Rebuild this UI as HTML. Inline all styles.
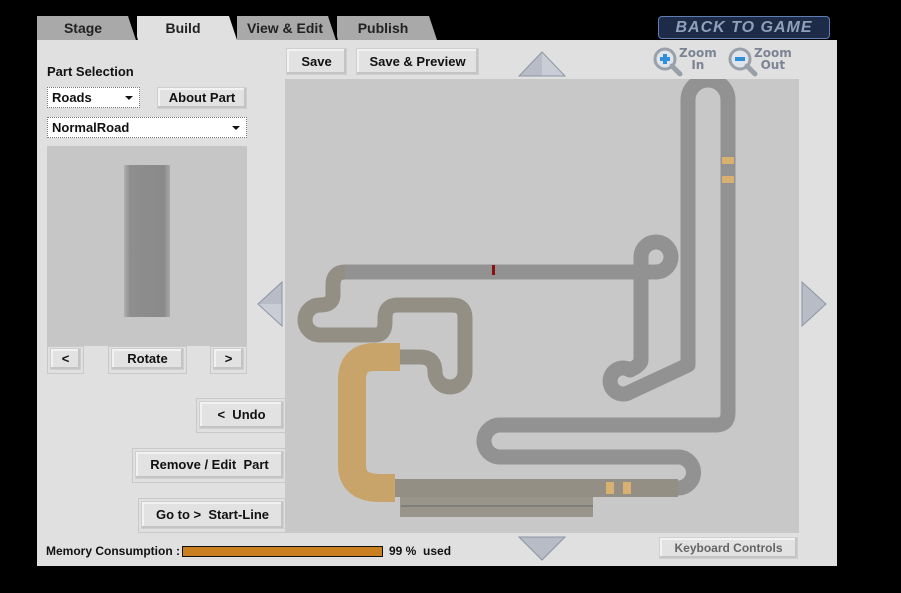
<!DOCTYPE html>
<html><head><style>
*{margin:0;padding:0;box-sizing:border-box}
body{width:901px;height:593px;background:#000;position:relative;overflow:hidden;font-family:"Liberation Sans",sans-serif;font-weight:bold;font-size:13px;color:#111}
.a{position:absolute}
.panel{left:37px;top:40px;width:800px;height:526px;background:#e0e0e0}
.tab{top:16px;height:24px;line-height:24px;text-align:center;font-size:14px;color:#222}
.btn{background:#e2e2e2;border:1px solid #cfcfcf;box-shadow:inset -2px -2px 0 #c4c4c4,inset 2px 2px 0 #f2f2f2;text-align:center;font-size:13px}
.frame{border:1px solid #c9c9c9}
.sel{background:#fff;border:1px dotted #777;font-size:13px;padding-left:4px;line-height:20px}
.sel:after{content:"";position:absolute;right:6px;top:8px;border-left:4px solid transparent;border-right:4px solid transparent;border-top:4px solid #111}
</style></head><body>
<div class="a panel"></div>
<svg class="a" style="left:37px;top:16px" width="400" height="24">
<polygon points="0,0 92,0 100,24 0,24" fill="#a9a9a9"/>
<polygon points="100,0 192,0 200,24 100,24" fill="#e0e0e0"/>
<polygon points="200,0 292,0 300,24 200,24" fill="#a9a9a9"/>
<polygon points="300,0 392,0 400,24 300,24" fill="#a9a9a9"/>
<line x1="92" y1="0" x2="100" y2="24" stroke="#000" stroke-width="2"/>
<line x1="292" y1="0" x2="300" y2="24" stroke="#000" stroke-width="2"/>
</svg>
<div class="a tab" style="left:37px;width:92px">Stage</div>
<div class="a tab" style="left:137px;width:92px">Build</div>
<div class="a tab" style="left:237px;width:96px">View &amp; Edit</div>
<div class="a tab" style="left:337px;width:92px">Publish</div>
<div class="a" style="left:658px;top:16px;width:172px;height:23px;background:#1d2b48;border:1px solid #5f7eb5;border-radius:4px;color:#8fa0b8;font-style:italic;font-size:16px;line-height:21px;text-align:center;letter-spacing:1px">BACK TO GAME</div>

<div class="a" style="left:47px;top:64px;font-size:13px">Part Selection</div>
<div class="a sel" style="left:47px;top:87px;width:93px;height:21px">Roads</div>
<div class="a btn" style="left:157px;top:87px;width:90px;height:22px;line-height:20px">About Part</div>
<div class="a sel" style="left:47px;top:117px;width:200px;height:21px">NormalRoad</div>
<div class="a" style="left:47px;top:146px;width:200px;height:200px;background:#c6c6c6"></div>
<div class="a" style="left:124px;top:165px;width:46px;height:152px;background:linear-gradient(90deg,#b0b0b0 0,#8e8e8e 6px,#8a8a8a 40px,#a8a8a8 46px)"></div>
<div class="a frame" style="left:47px;top:346px;width:37px;height:28px"></div>
<div class="a btn" style="left:50px;top:348px;width:31px;height:22px;line-height:20px">&lt;</div>
<div class="a frame" style="left:108px;top:346px;width:79px;height:28px"></div>
<div class="a btn" style="left:111px;top:348px;width:73px;height:22px;line-height:20px">Rotate</div>
<div class="a frame" style="left:210px;top:346px;width:37px;height:28px"></div>
<div class="a btn" style="left:213px;top:348px;width:31px;height:22px;line-height:20px">&gt;</div>
<div class="a frame" style="left:196px;top:398px;width:90px;height:35px"></div>
<div class="a btn" style="left:199px;top:401px;width:85px;height:28px;line-height:26px">&lt;&nbsp; Undo</div>
<div class="a frame" style="left:132px;top:448px;width:154px;height:35px"></div>
<div class="a btn" style="left:135px;top:451px;width:149px;height:28px;line-height:26px">Remove / Edit&nbsp; Part</div>
<div class="a frame" style="left:138px;top:498px;width:148px;height:35px"></div>
<div class="a btn" style="left:141px;top:501px;width:143px;height:28px;line-height:26px">Go to &gt;&nbsp; Start-Line</div>

<div class="a btn" style="left:286px;top:48px;width:61px;height:27px;line-height:25px">Save</div>
<div class="a btn" style="left:356px;top:48px;width:123px;height:27px;line-height:25px">Save &amp; Preview</div>
<svg class="a" style="left:518px;top:51px" width="48" height="26"><polygon points="24,1 47,25 1,25" fill="#b7bcc6"/><polygon points="24,1 24,25 47,25" fill="#c9ced6"/><polygon points="24,1 1,25 47,25" fill="none" stroke="#8d94a2"/></svg>
<svg class="a" style="left:518px;top:536px" width="48" height="25"><polygon points="1,1 47,1 24,24" fill="#b7bcc6"/><polygon points="1,1 47,1 24,24" fill="none" stroke="#8d94a2"/></svg>
<svg class="a" style="left:257px;top:281px" width="27" height="46"><polygon points="25,1 25,45 1,23" fill="#b7bcc6"/><polygon points="25,23 25,45 1,23" fill="#c9ced6"/><polygon points="25,1 25,45 1,23" fill="none" stroke="#8d94a2"/></svg>
<svg class="a" style="left:801px;top:281px" width="27" height="46"><polygon points="1,1 1,45 25,23" fill="#b7bcc6"/><polygon points="1,1 1,45 25,23" fill="none" stroke="#8d94a2"/></svg>

<svg class="a" style="left:652px;top:44px" width="40" height="35"><circle cx="13" cy="15" r="10" fill="#dfe4ea" stroke="#9aa0aa" stroke-width="3"/><line x1="20" y1="22" x2="28" y2="30" stroke="#9aa0aa" stroke-width="5" stroke-linecap="round"/><path d="M13 10v10M8 15h10" stroke="#2e8fd8" stroke-width="4"/></svg>
<div class="a" style="left:679px;top:47px;font-size:12px;color:#7c8494;line-height:12px;text-align:center;font-family:'DejaVu Sans',sans-serif">Zoom<br>In</div>
<svg class="a" style="left:727px;top:44px" width="40" height="35"><circle cx="13" cy="15" r="10" fill="#dfe4ea" stroke="#9aa0aa" stroke-width="3"/><line x1="20" y1="22" x2="28" y2="30" stroke="#9aa0aa" stroke-width="5" stroke-linecap="round"/><path d="M8 15h10" stroke="#2e8fd8" stroke-width="4"/></svg>
<div class="a" style="left:754px;top:47px;font-size:12px;color:#7c8494;line-height:12px;text-align:center;font-family:'DejaVu Sans',sans-serif">Zoom<br>Out</div>

<svg class="a" style="left:285px;top:79px" width="514" height="454" viewBox="285 79 514 454">
<rect x="285" y="79" width="514" height="454" fill="#c8c8c8"/>
<rect x="400" y="497" width="193" height="20" fill="#9a958a"/>
<line x1="401" y1="506" x2="593" y2="506" stroke="#666"/>
<g fill="none" stroke-linejoin="round" stroke-linecap="butt">
<path d="M345,272 H657 A15,15 0 1 0 641,257 V360 Q641,365 630,370 A13,13 0 1 0 630,392 L688,365 V100 A16,16 0 0 1 728,100 V413 Q728,425 716,425 H500 A16,16 0 0 0 500,457 H678 A15,15 0 0 1 678,488 H390" stroke="#929292" stroke-width="15"/>
<path d="M678,488 H390" stroke="#948f85" stroke-width="18"/>
<path d="M345,272 Q333,272 333,285 V295 Q333,305 320,305 A15,15 0 0 0 320,335 H375 Q385,335 385,322 V318 Q385,305 398,305 H452 Q465,305 465,318 V372 A15,15 0 0 1 435,372 Q435,357 420,357 H395" stroke="#948f85" stroke-width="15"/>
<path d="M400,357 H375 Q352,357 352,380 V465 Q352,488 380,488 H395" stroke="#c9a46a" stroke-width="28"/>
</g>
<g>
<rect x="722" y="157" width="12" height="7" fill="#d8b070"/><rect x="722" y="176" width="12" height="7" fill="#d8b070"/>
<rect x="606" y="482" width="8" height="12" fill="#d8b070"/><rect x="623" y="482" width="8" height="12" fill="#d8b070"/>
<rect x="492" y="265" width="3" height="10" fill="#8b1010"/>
</g>
</svg>

<div class="a" style="left:46px;top:544px;font-size:12px">Memory Consumption :</div>
<div class="a" style="left:182px;top:546px;width:201px;height:11px;border:1px solid #111;background:#c97f1f"></div>
<div class="a" style="left:389px;top:544px;font-size:12px">99 %&nbsp; used</div>
<div class="a btn" style="left:659px;top:537px;width:139px;height:22px;line-height:20px;color:#666;font-size:12px">Keyboard Controls</div>
</body></html>
